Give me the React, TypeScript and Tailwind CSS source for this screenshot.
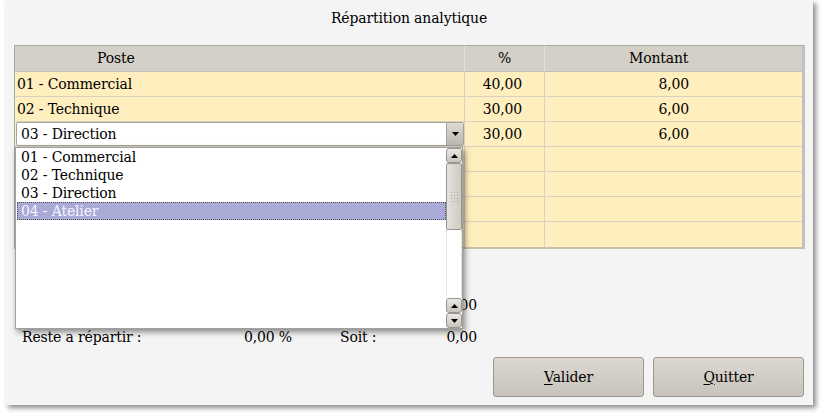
import React from "react";

const rows = [
  { poste: "01 - Commercial", pct: "40,00", mt: "8,00" },
  { poste: "02 - Technique", pct: "30,00", mt: "6,00" },
  { poste: "03 - Direction", pct: "30,00", mt: "6,00", combo: true },
  { poste: "", pct: "", mt: "" },
  { poste: "", pct: "", mt: "" },
  { poste: "", pct: "", mt: "" },
  { poste: "", pct: "", mt: "" },
];

const items = ["01 - Commercial", "02 - Technique", "03 - Direction", "04 - Atelier"];

function Tri({ up }: { up?: boolean }) {
  return (
    <svg width="7" height="4" viewBox="0 0 7 4">
      {up ? <polygon points="0,4 7,4 3.5,0" fill="#000" /> : <polygon points="0,0 7,0 3.5,4" fill="#000" />}
    </svg>
  );
}

function ScrollBtn({ up }: { up?: boolean }) {
  return (
    <div className="h-[15px] w-[16px] rounded-[3px] border border-[#9a968e] bg-gradient-to-b from-[#ebe9e4] to-[#c9c5bd] flex items-center justify-center">
      <Tri up={up} />
    </div>
  );
}

export default function App() {
  return (
    <div
      className="w-[822px] h-[414px] bg-white relative overflow-hidden text-[#000]"
      style={{ fontFamily: '"DejaVu Serif", serif' }}
    >
      <div className="ml-[5px] w-[808px] h-[405px] bg-[#f4f4f4] shadow-[3px_3px_5px_rgba(0,0,0,0.45)] flex flex-col relative text-[14px] tracking-[-0.15px]">
        <div className="h-[35px] flex items-center justify-center pt-[1px]">Répartition analytique</div>
        {/* table */}
        <div className="mt-[10px] ml-[9px] w-[791px] border-t border-l border-[#a8a8a8] border-r-[3px] border-r-[#c0c0c0] border-b-[2px] border-b-[#c8c0a8]">
          <div className="grid grid-cols-[450px_80px_1fr] h-[26px] bg-[#d4d0c8] border-b border-[#c4c0b8]">
            <div className="flex items-center pl-[82px] border-r border-[#e4e0d8]">Poste</div>
            <div className="flex items-center justify-center border-r border-[#e4e0d8]">%</div>
            <div className="flex items-center pl-[84px]">Montant</div>
          </div>
          {rows.map((r, i) => (
            <div key={i} className="grid grid-cols-[450px_80px_1fr] h-[25px] bg-[#ffeebe] border-b border-[#d8d0c0] last:border-b-0">
              <div className="flex items-center border-r border-[#d8d0c0] relative pt-[1px]">
                {r.combo ? (
                  <div className="absolute left-[1px] top-[0px] w-[448px] h-[24px] bg-white border border-[#a6a29a] rounded-[2px] flex items-center">
                    <div className="flex-1 pl-[4px] pt-[1px]">{r.poste}</div>
                    <div className="w-[17px] h-full bg-gradient-to-b from-[#dedad4] to-[#bbb7af] border-l border-[#a6a29a] flex items-center justify-center">
                      <Tri />
                    </div>
                  </div>
                ) : (
                  <span className="pl-[2px]">{r.poste}</span>
                )}
              </div>
              <div className="flex items-center justify-end pr-[22px] border-r border-[#d8d0c0] pt-[1px]">{r.pct}</div>
              <div className="flex items-center justify-end pr-[113px] pt-[1px]">{r.mt}</div>
            </div>
          ))}
        </div>
        {/* totals */}
        <div className="mt-[46px] ml-[17px] flex h-[20px] items-center">
          <div className="w-[270px] flex justify-between">
            <span>Total :</span>
            <span>100,00 %</span>
          </div>
          <div className="w-[185px] flex justify-between pl-[48px]">
            <span>Soit :</span>
            <span>20,00</span>
          </div>
        </div>
        <div className="mt-[12px] ml-[17px] flex h-[20px] items-center">
          <div className="w-[270px] flex justify-between">
            <span>Reste a répartir :</span>
            <span>0,00 %</span>
          </div>
          <div className="w-[185px] flex justify-between pl-[48px]">
            <span>Soit :</span>
            <span>0,00</span>
          </div>
        </div>
        <div className="mt-[10px] ml-[488px] flex gap-[9px]">
          <button className="w-[151px] h-[40px] rounded-[3px] border border-[#9c988f] bg-gradient-to-b from-[#dcd8d1] to-[#c8c4bc] text-[14px]" style={{ fontFamily: '"DejaVu Serif", serif' }}>
            <span className="underline underline-offset-2">V</span>alider
          </button>
          <button className="w-[151px] h-[40px] rounded-[3px] border border-[#9c988f] bg-gradient-to-b from-[#dcd8d1] to-[#c8c4bc] text-[14px]" style={{ fontFamily: '"DejaVu Serif", serif' }}>
            <span className="underline underline-offset-2">Q</span>uitter
          </button>
        </div>

        {/* dropdown popup */}
        <div className="absolute left-[10px] top-[147px] w-[448px] h-[182px] bg-white border border-[#a0a0a0] shadow-[2px_3px_6px_rgba(0,0,0,0.45)] flex">
          <div className="flex-1 pt-[0px] pl-[1px]">
            {items.map((it, i) => (
              <div
                key={i}
                className={
                  i === 3
                    ? "h-[18px] flex items-center pl-[3px] bg-[#aaaad6] text-[#f4f4ff] border border-dotted border-[#555]"
                    : "h-[18px] flex items-center pl-[4px]"
                }
              >
                {it}
              </div>
            ))}
          </div>
          <div className="w-[16px] flex flex-col">
            <ScrollBtn up />
            <div className="h-[67px] w-[16px] rounded-[2px] border border-[#9a968e] bg-gradient-to-r from-[#e4e2dc] to-[#cfcbc3] flex items-center justify-center">
              <div className="grid grid-cols-3 gap-[2px]">
                {Array.from({ length: 12 }).map((_, k) => (
                  <div key={k} className="w-[1px] h-[1px] bg-[#aaa6a0]" />
                ))}
              </div>
            </div>
            <div className="flex-1 border-x border-dotted border-[#c8c8c8]" />
            <ScrollBtn up />
            <ScrollBtn />
          </div>
        </div>
      </div>
    </div>
  );
}
